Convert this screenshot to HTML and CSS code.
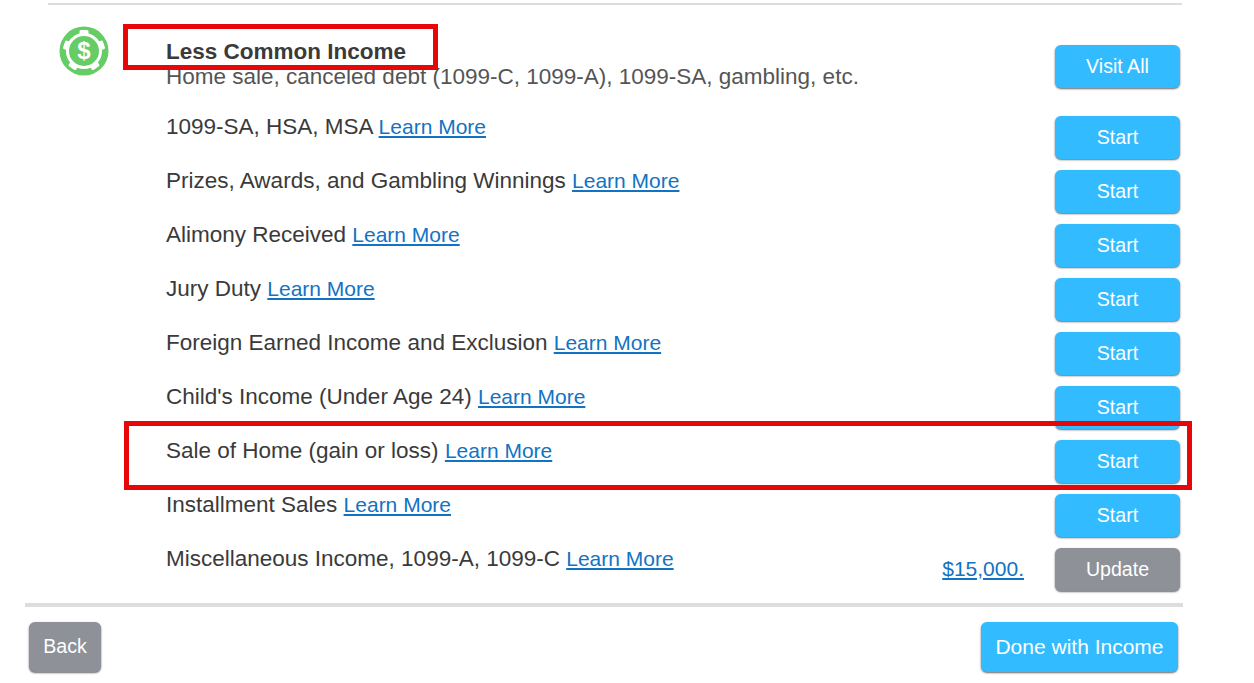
FILE: index.html
```html
<!DOCTYPE html>
<html lang="en">
<head>
    <meta charset="UTF-8">
    <meta name="viewport" content="width=device-width, initial-scale=1.0">
    <title>Less Common Income</title>
    <link rel="stylesheet" href="styles.css">
</head>
<body>

<div class="page">
    <div class="income">
        <!-- Section header -->
        <div class="header">
            <svg class="icon" viewBox="0 0 50 50" aria-hidden="true">
                <circle cx="25" cy="25" r="24.500" fill="#66cc66"/>
                <circle cx="25" cy="25" r="18" fill="#ffffff"/>
                <g fill="#ffffff">
                    <rect x="20.500" y="4" width="9" height="5" rx="1.500"/>
                    <rect x="20.500" y="4" width="9" height="5" rx="1.500" transform="rotate(72 25 25)"/>
                    <rect x="20.500" y="4" width="9" height="5" rx="1.500" transform="rotate(144 25 25)"/>
                    <rect x="20.500" y="4" width="9" height="5" rx="1.500" transform="rotate(216 25 25)"/>
                    <rect x="20.500" y="4" width="9" height="5" rx="1.500" transform="rotate(288 25 25)"/>
                </g>
                <circle cx="25" cy="25" r="15" fill="#66cc66"/>
                <text class="dollar" x="25" y="33" text-anchor="middle">$</text>
            </svg>
            <div class="heading">
                <div class="title">Less Common Income</div>
                <div class="subtitle">Home sale, canceled debt (1099-C, 1099-A), 1099-SA, gambling, etc.</div>
            </div>
            <button class="btn visit">Visit All</button>
        </div>

        <!-- Income rows -->
        <div class="row">
            <div class="label">1099-SA, HSA, MSA <a href="#">Learn More</a></div>
            <button class="btn">Start</button>
        </div>
        <div class="row">
            <div class="label">Prizes, Awards, and Gambling Winnings <a href="#">Learn More</a></div>
            <button class="btn">Start</button>
        </div>
        <div class="row">
            <div class="label">Alimony Received <a href="#">Learn More</a></div>
            <button class="btn">Start</button>
        </div>
        <div class="row">
            <div class="label">Jury Duty <a href="#">Learn More</a></div>
            <button class="btn">Start</button>
        </div>
        <div class="row">
            <div class="label">Foreign Earned Income and Exclusion <a href="#">Learn More</a></div>
            <button class="btn">Start</button>
        </div>
        <div class="row">
            <div class="label">Child's Income (Under Age 24) <a href="#">Learn More</a></div>
            <button class="btn">Start</button>
        </div>
        <div class="row">
            <div class="label">Sale of Home (gain or loss) <a href="#">Learn More</a></div>
            <button class="btn">Start</button>
        </div>
        <div class="row">
            <div class="label">Installment Sales <a href="#">Learn More</a></div>
            <button class="btn">Start</button>
        </div>
        <div class="row">
            <div class="label">Miscellaneous Income, 1099-A, 1099-C <a href="#">Learn More</a></div>
            <a class="amount" href="#">$15,000.</a>
            <button class="btn gray">Update</button>
        </div>
    </div>

    <div class="footer">
        <button class="btn gray back">Back</button>
        <button class="btn done">Done with Income</button>
    </div>

    <!-- Red callouts drawn over the page -->
    <div class="callout callout-title"></div>
    <div class="callout callout-row"></div>
</div>

</body>
</html>
```

FILE: styles.css
```css
body {
    margin: 0;
    font-family: "Liberation Sans", Arial, sans-serif;
    background-color: #fff;
    color: #3a3a3a;
}
.page {
    position: relative;
    width: 1254px;
    height: 683px;
    overflow: hidden;
    padding-top: 3px;
    box-sizing: border-box;
}
.income {
    width: 1134px;
    margin-left: 48px;
    border-top: 2px solid #ddd;
}
.header {
    display: flex;
    align-items: flex-start;
    height: 107px;
}
.icon {
    width: 50px;
    height: 50px;
    margin: 21px 0 0 11px;
    flex-shrink: 0;
}
.dollar {
    font-family: "Liberation Sans", Arial, sans-serif;
    font-size: 24px;
    font-weight: bold;
    fill: #fff;
}
.heading {
    flex: 1;
    margin: 34px 0 0 57px;
}
.title {
    font-size: 22.500px;
    font-weight: bold;
    line-height: 25px;
}
.subtitle {
    font-size: 22.500px;
    line-height: 26px;
    color: #555;
}
.row {
    display: flex;
    align-items: flex-start;
    height: 54px;
    padding-left: 118px;
    box-sizing: border-box;
}
.label {
    flex: 1;
    font-size: 22.500px;
    line-height: 26px;
    padding-top: 2px;
}
.label a {
    font-size: 21px;
}
a {
    color: #1273c4;
}
.amount {
    font-size: 21px;
    line-height: 26px;
    margin: 12px 31px 0 0;
}
.btn {
    width: 125px;
    height: 43px;
    padding: 0;
    border: none;
    border-radius: 6px;
    background-color: #33bbff;
    color: #fff;
    font-family: inherit;
    font-size: 19.600px;
    box-shadow: 0 1px 2px rgba(0, 0, 0, 0.6);
    cursor: pointer;
}
.row .btn {
    margin: 4px 2px 0 0;
}
.visit {
    margin: 40px 2px 0 0;
}
.gray {
    background-color: #8e9198;
}
.footer {
    display: flex;
    justify-content: space-between;
    width: 1158px;
    margin: 5px 0 0 25px;
    border-top: 4px solid #ddd;
    padding: 15px 5px 0 4px;
    box-sizing: border-box;
}
.footer .btn {
    height: 50px;
}
.back {
    width: 72px;
    padding-bottom: 2px;
}
.footer .done {
    width: 197px;
    font-size: 21px;
}
.callout {
    position: absolute;
    box-sizing: border-box;
    border: 5px solid #e60808;
}
.callout-title {
    left: 123px;
    top: 24px;
    width: 315px;
    height: 46px;
}
.callout-row {
    left: 124px;
    top: 421px;
    width: 1068px;
    height: 69px;
}
```
